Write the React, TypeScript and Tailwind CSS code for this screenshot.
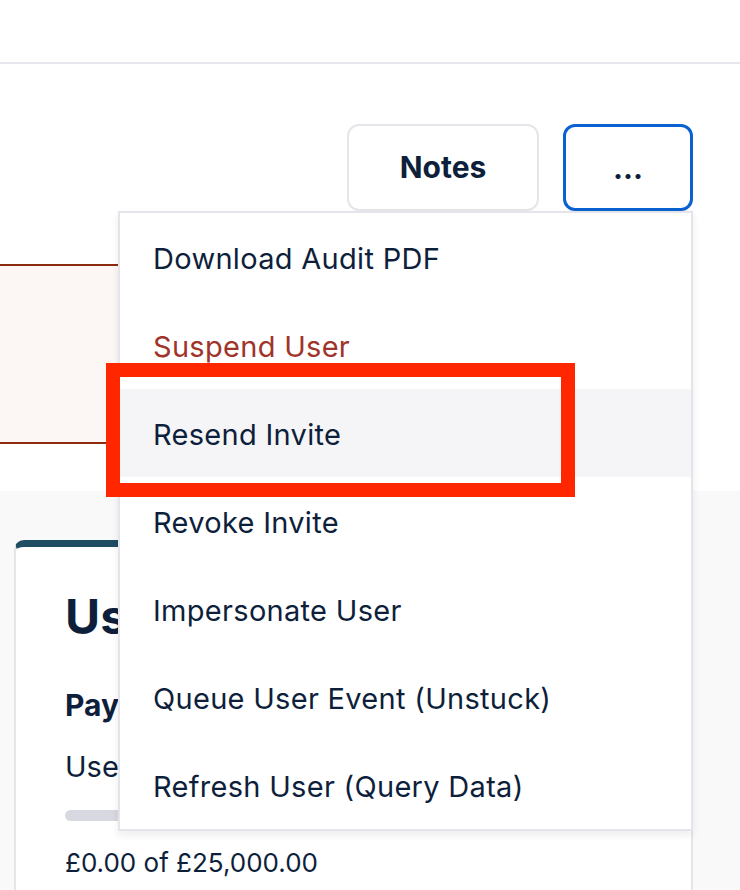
export default function App() {
  const items = [
    { label: "Download Audit PDF" },
    { label: "Suspend User", danger: true },
    { label: "Resend Invite", active: true },
    { label: "Revoke Invite" },
    { label: "Impersonate User" },
    { label: "Queue User Event (Unstuck)" },
    { label: "Refresh User (Query Data)" },
  ];

  return (
    <div className="relative w-[740px] h-[890px] overflow-hidden bg-white text-[#0e1f3c] font-['Inter',sans-serif]">
      {/* top bar */}
      <header className="h-[64px] border-b-2 border-[#e6e6ec] bg-white" />

      {/* actions */}
      <div className="flex justify-end gap-[24px] pt-[60px] pr-[47px]">
        <button className="w-[192px] h-[87px] rounded-[12px] border-2 border-[#e5e5ea] bg-white text-[30px] font-bold">
          Notes
        </button>
        <div className="relative">
          <button className="w-[130px] h-[87px] rounded-[12px] border-[3px] border-[#0a62d0] bg-white text-[30px] font-bold leading-none">
            ...
          </button>

          {/* dropdown */}
          <div className="absolute right-0 top-full z-20 w-[575px] border-2 border-[#e4e4ea] bg-white shadow-[0_4px_8px_rgba(20,20,50,0.08)]">
            {items.map((item) => (
              <div
                key={item.label}
                className={`flex h-[88px] items-center px-[33px] pt-[3px] text-[29px] tracking-[0.3px] ${
                  item.danger ? "text-[#a0342a]" : "text-[#0e1f3c]"
                } ${item.active ? "bg-[#f5f5f8]" : "bg-white"}`}
              >
                {item.label}
              </div>
            ))}
          </div>
        </div>
      </div>

      {/* warning banner */}
      <div className="mt-[53px] mr-[120px] h-[180px] border-y-2 border-[#8b2a0c] bg-[#fcf7f4]" />

      {/* content */}
      <div className="mt-[47px] h-[400px] bg-[#f9f9fa] pt-[49px] pl-[14px] pr-[47px]">
        <div className="h-[400px] rounded-t-[10px] border-x-2 border-t-[7px] border-[#e5e5ea] border-t-[#1f4d62] bg-white pl-[49px] pt-[40px]">
          <h2 className="text-[48px] font-bold leading-[60px]">User Limits</h2>
          <p className="mt-[38px] text-[30px] font-bold leading-[40px]">Payroll Advance</p>
          <p className="mt-[22px] text-[29px] leading-[40px]">Used this month</p>
          <div className="mt-[23px] h-[11px] w-[560px] rounded-full bg-[#d8d8e0]" />
          <p className="mt-[22px] text-[26px] leading-[40px]">£0.00 of £25,000.00</p>
        </div>
      </div>

      {/* annotation */}
      <div className="pointer-events-none absolute left-[106px] top-[363px] z-30 h-[134px] w-[469px] border-[14px] border-[#ff2600]" />
    </div>
  );
}
